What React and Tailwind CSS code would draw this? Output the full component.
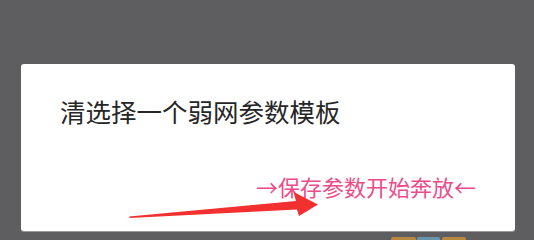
import React from "react";

export default function App() {
  return (
    <div className="relative w-[534px] h-[240px] overflow-hidden bg-[#5e5e60] pt-[64px] pl-[21px] flex flex-col" style={{ fontFamily: '"Noto Sans CJK SC", "Noto Sans", sans-serif' }}>
      <div className="w-[494px] h-[167px] shrink-0 bg-white rounded-[3px] flex flex-col pt-[34px] px-[39px] shadow-[0_1px_0_#9a9a9a]">
        <div className="text-[25.5px] leading-[25px] text-[#262626]">清选择一个弱网参数模板</div>
        <div className="mt-[52px] text-right text-[22px] leading-[22px] text-[#ec4c89]">→保存参数开始奔放←</div>
      </div>
      <div className="flex mt-[6px] ml-[370px] gap-[1px] shrink-0">
        <div className="w-[25px] h-[8px] rounded-t-[2px] bg-[#b98740]"></div>
        <div className="w-[23px] h-[8px] rounded-t-[2px] bg-[#6a93ad]"></div>
        <div className="ml-[1px] w-[24px] h-[8px] rounded-t-[2px] bg-[#b98740]"></div>
      </div>
      <svg className="absolute inset-0 pointer-events-none" width="534" height="240" viewBox="0 0 534 240">
        <polygon points="129,216.5 296,201 293.5,192 318,204.5 299,216 297,209.5 130,218" fill="#f2302f" />
      </svg>
    </div>
  );
}
